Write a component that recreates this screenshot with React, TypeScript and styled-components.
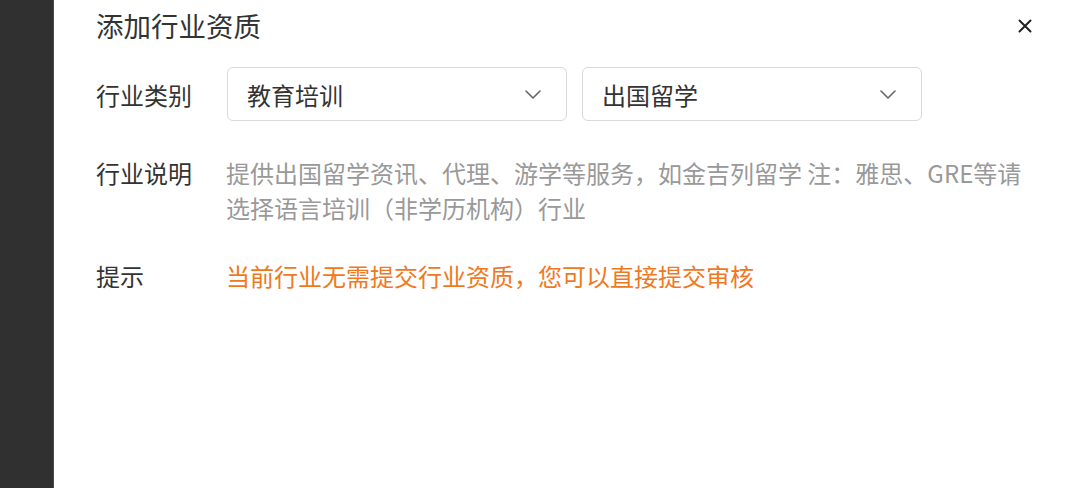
import React from "react";
import styled, { createGlobalStyle } from "styled-components";

const GlobalStyle = createGlobalStyle`
  html, body { margin: 0; padding: 0; background: #ffffff; }
  body { font-family: "Noto Sans CJK SC", "Noto Sans", sans-serif; }
  * { box-sizing: border-box; }
`;

const Page = styled.div`
  display: flex;
  width: 1080px;
  height: 488px;
  overflow: hidden;
`;

const Sidebar = styled.div`
  width: 54px;
  flex: none;
  background: #303030;
  border-right: 1px solid #4a4a4a;
`;

const Panel = styled.div`
  flex: 1;
  background: #ffffff;
  padding: 0 48px 0 42px;
  display: flex;
  flex-direction: column;
`;

const Header = styled.div`
  height: 52px;
  display: flex;
  align-items: center;
  justify-content: space-between;
`;

const Title = styled.h1`
  margin: 0;
  font-size: 27.5px;
  font-weight: 400;
  color: #333333;
  line-height: 1;
`;

const CloseButton = styled.button`
  border: none;
  background: none;
  padding: 0;
  width: 14px;
  height: 14px;
  display: flex;
  cursor: pointer;
`;

const Form = styled.div`
  display: flex;
  flex-direction: column;
`;

const Row = styled.div<{ $top: number; $center?: boolean }>`
  display: flex;
  align-items: ${(p) => (p.$center ? "center" : "flex-start")};
  margin-top: ${(p) => p.$top}px;
`;

const Label = styled.div`
  width: 130px;
  flex: none;
  font-size: 24px;
  line-height: 35px;
  color: #333333;
`;

const Selects = styled.div`
  display: flex;
  gap: 15px;
  padding-left: 1px;
`;

const Select = styled.div`
  width: 340px;
  height: 54px;
  border: 1px solid #d9d9d9;
  border-radius: 6px;
  display: flex;
  align-items: center;
  justify-content: space-between;
  padding: 0 25px 0 19px;
  font-size: 24px;
  color: #333333;
`;

const Description = styled.div`
  width: 805px;
  font-size: 24px;
  line-height: 35px;
  color: #999999;
`;

const Tip = styled.div`
  font-size: 24px;
  line-height: 35px;
  color: #f0781e;
`;

const Chevron = () => (
  <svg width="16" height="9" viewBox="0 0 16 9" fill="none">
    <path d="M1 1l7 7 7-7" stroke="#666" strokeWidth="1.6" strokeLinecap="round" strokeLinejoin="round" />
  </svg>
);

export default function App() {
  return (
    <>
      <GlobalStyle />
      <Page>
        <Sidebar />
        <Panel>
          <Header>
            <Title>添加行业资质</Title>
            <CloseButton aria-label="关闭">
              <svg width="14" height="14" viewBox="0 0 14 14">
                <path d="M1.5 1.5l11 11M12.5 1.5l-11 11" stroke="#222" strokeWidth="2" strokeLinecap="round" />
              </svg>
            </CloseButton>
          </Header>
          <Form>
            <Row $top={15} $center>
              <Label>行业类别</Label>
              <Selects>
                <Select>
                  <span>教育培训</span>
                  <Chevron />
                </Select>
                <Select>
                  <span>出国留学</span>
                  <Chevron />
                </Select>
              </Selects>
            </Row>
            <Row $top={34}>
              <Label>行业说明</Label>
              <Description>
                提供出国留学资讯、代理、游学等服务，如金吉列留学 注：雅思、GRE等请选择语言培训（非学历机构）行业
              </Description>
            </Row>
            <Row $top={33}>
              <Label>提示</Label>
              <Tip>当前行业无需提交行业资质，您可以直接提交审核</Tip>
            </Row>
          </Form>
        </Panel>
      </Page>
    </>
  );
}
